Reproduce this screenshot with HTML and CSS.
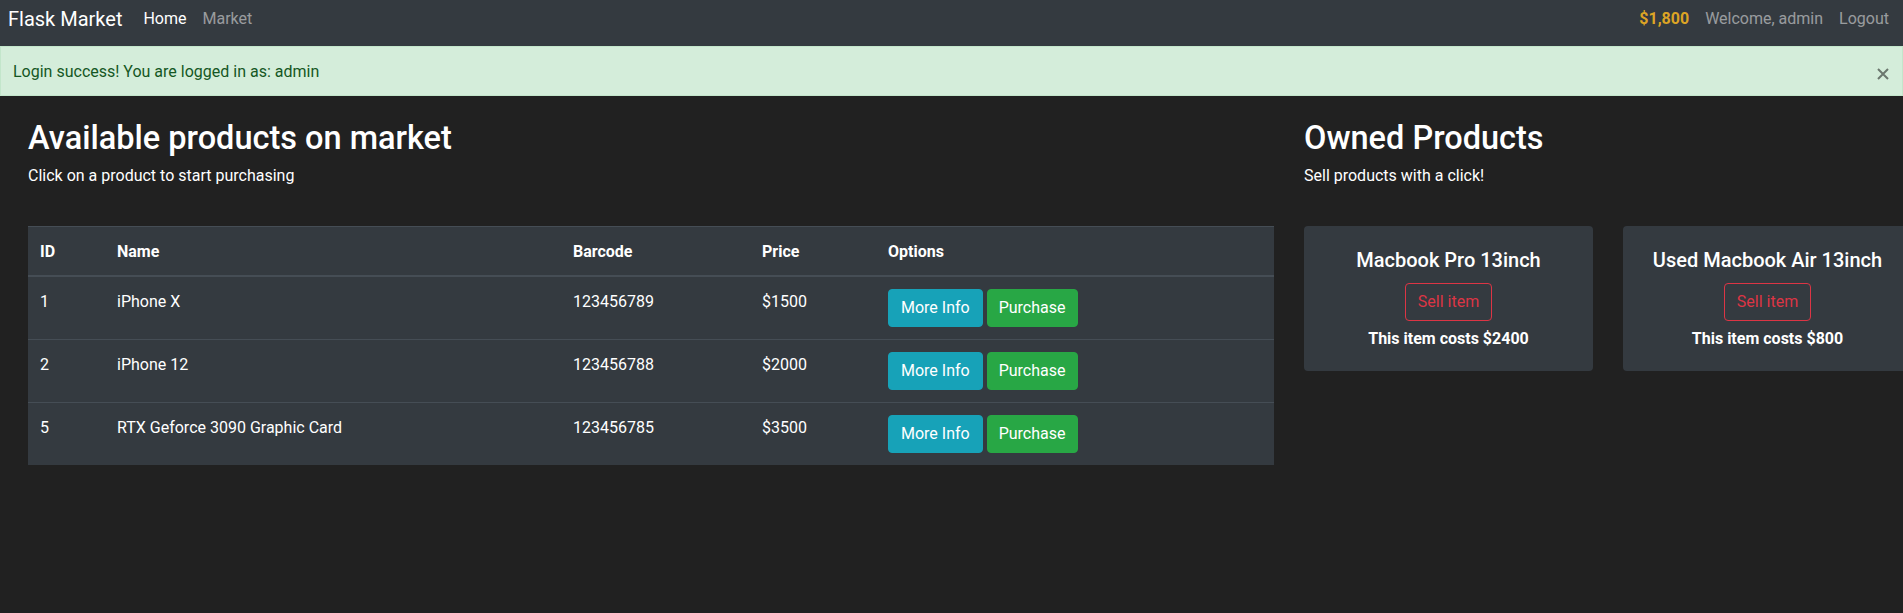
FILE: index.html
```html
<!DOCTYPE html>
<html lang="en">
<head>
<meta charset="utf-8">
<title>Flask Market</title>
<link rel="stylesheet" href="styles.css">
</head>
<body>
<nav class="navbar">
  <a class="brand" href="#">Flask Market</a>
  <ul class="nav">
    <li><a class="nav-link active" href="#">Home</a></li>
    <li><a class="nav-link" href="#">Market</a></li>
  </ul>
  <ul class="nav nav-right">
    <li><span class="nav-link budget">$1,800</span></li>
    <li><span class="nav-link">Welcome, admin</span></li>
    <li><a class="nav-link" href="#">Logout</a></li>
  </ul>
</nav>

<div class="alert">
  <span class="alert-text">Login success! You are logged in as: admin</span>
  <button class="close" aria-label="Close">
    <svg width="12" height="12" viewBox="0 0 12 12"><path d="M1 1 L11 11 M11 1 L1 11" stroke="currentColor" stroke-width="2" fill="none"/></svg>
  </button>
</div>

<main class="main">
  <section class="col-left">
    <h2 class="title">Available products on market</h2>
    <p class="lead">Click on a product to start purchasing</p>
    <table class="table">
      <thead>
        <tr>
          <th class="c-id">ID</th>
          <th class="c-name">Name</th>
          <th class="c-bar">Barcode</th>
          <th class="c-price">Price</th>
          <th class="c-opt">Options</th>
        </tr>
      </thead>
      <tbody>
        <tr>
          <td>1</td>
          <td>iPhone X</td>
          <td>123456789</td>
          <td>$1500</td>
          <td class="opt-cell"><button class="btn btn-info">More Info</button> <button class="btn btn-success">Purchase</button></td>
        </tr>
        <tr>
          <td>2</td>
          <td>iPhone 12</td>
          <td>123456788</td>
          <td>$2000</td>
          <td class="opt-cell"><button class="btn btn-info">More Info</button> <button class="btn btn-success">Purchase</button></td>
        </tr>
        <tr>
          <td>5</td>
          <td>RTX Geforce 3090 Graphic Card</td>
          <td>123456785</td>
          <td>$3500</td>
          <td class="opt-cell"><button class="btn btn-info">More Info</button> <button class="btn btn-success">Purchase</button></td>
        </tr>
      </tbody>
    </table>
  </section>

  <section class="col-right">
    <h2 class="title pad">Owned Products</h2>
    <p class="lead pad">Sell products with a click!</p>
    <div class="cards">
      <div class="card-col">
        <div class="card">
          <h5 class="card-title">Macbook Pro 13inch</h5>
          <button class="btn btn-outline-danger">Sell item</button>
          <p class="card-text">This item costs $2400</p>
        </div>
      </div>
      <div class="card-col">
        <div class="card">
          <h5 class="card-title">Used Macbook Air 13inch</h5>
          <button class="btn btn-outline-danger">Sell item</button>
          <p class="card-text">This item costs $800</p>
        </div>
      </div>
    </div>
  </section>
</main>
</body>
</html>
```

FILE: styles.css
```css
* { box-sizing: border-box; }

html, body {
  margin: 0;
  padding: 0;
}

body {
  background: #212121;
  color: #fff;
  font-family: Roboto, "Liberation Sans", sans-serif;
  font-size: 16px;
  line-height: 1.5;
  overflow-x: hidden;
  width: 1903px;
}

/* Navbar */
.navbar {
  display: flex;
  align-items: flex-start;
  height: 46px;
  padding: 4px 6px 0 8px;
  background: #343a40;
}

.brand {
  font-size: 20px;
  line-height: 30px;
  color: #fff;
  text-decoration: none;
  margin-right: 13px;
}

.nav {
  display: flex;
  list-style: none;
  margin: 3px 0 0 0;
  padding: 0;
}

.nav-right {
  margin-left: auto;
}

.nav-link {
  display: block;
  padding: 0 8px;
  line-height: 24px;
  color: rgba(255, 255, 255, 0.5);
  text-decoration: none;
}

.nav-link.active {
  color: #fff;
}

.nav-link.budget {
  color: #dca425;
  font-weight: 700;
}

/* Alert */
.alert {
  display: flex;
  align-items: flex-start;
  justify-content: space-between;
  height: 50px;
  padding: 13px 13px 11px 12px;
  background: #d4edda;
  color: #155724;
  border: 1px solid #c3e6cb;
}

.alert-text {
  line-height: 24px;
}

.close {
  background: none;
  border: 0;
  padding: 0;
  margin-top: 8px;
  color: #6b776e;
  display: flex;
  cursor: pointer;
}

/* Main layout */
.main {
  display: flex;
  padding: 23px 0 0 13px;
}

.col-left {
  flex: 0 0 1276px;
  padding: 0 15px;
}

.col-right {
  flex: 0 0 638px;
}

.pad {
  padding: 0 15px;
}

.title {
  font-size: 32.5px;
  font-weight: 500;
  line-height: 39px;
  margin: 0 0 6px 0;
}

.lead {
  margin: 0 0 38px 0;
  line-height: 24px;
}

/* Table */
.table {
  width: 1246px;
  border-collapse: collapse;
  table-layout: fixed;
  background: #343a40;
  color: #fff;
}

.table th,
.table td {
  text-align: left;
  vertical-align: top;
  padding: 13px 12px 11px 12px;
  line-height: 24px;
}

.table td.opt-cell {
  padding: 12px;
}

.table th {
  font-weight: 700;
  border-top: 1px solid #454d55;
  border-bottom: 2px solid #454d55;
}

.table td {
  border-top: 1px solid #454d55;
}

.c-id { width: 77px; }
.c-name { width: 456px; }
.c-bar { width: 189px; }
.c-price { width: 126px; }

/* Buttons */
.btn {
  display: inline-block;
  font-family: inherit;
  font-size: 16px;
  line-height: 24px;
  padding: 6px 12px;
  border: 1px solid transparent;
  border-radius: 4px;
  color: #fff;
  cursor: pointer;
}

.btn-info {
  background: #17a2b8;
  border-color: #17a2b8;
}

.btn-success {
  background: #28a745;
  border-color: #28a745;
  padding: 6px 11px;
}

.btn-outline-danger {
  background: transparent;
  border-color: #dc3545;
  color: #dc3545;
  margin-top: 11px;
}

/* Cards */
.cards {
  display: flex;
}

.card-col {
  flex: 0 0 319px;
  padding: 0 15px;
}

.card {
  background: #343a40;
  border-radius: 4px;
  padding: 20px;
  text-align: center;
}

.card-title {
  margin: 2px 0 0 0;
  font-size: 20px;
  font-weight: 500;
  line-height: 24px;
}

.card-text {
  margin: 6px 0 0 0;
  font-weight: 700;
  line-height: 24px;
}
```
